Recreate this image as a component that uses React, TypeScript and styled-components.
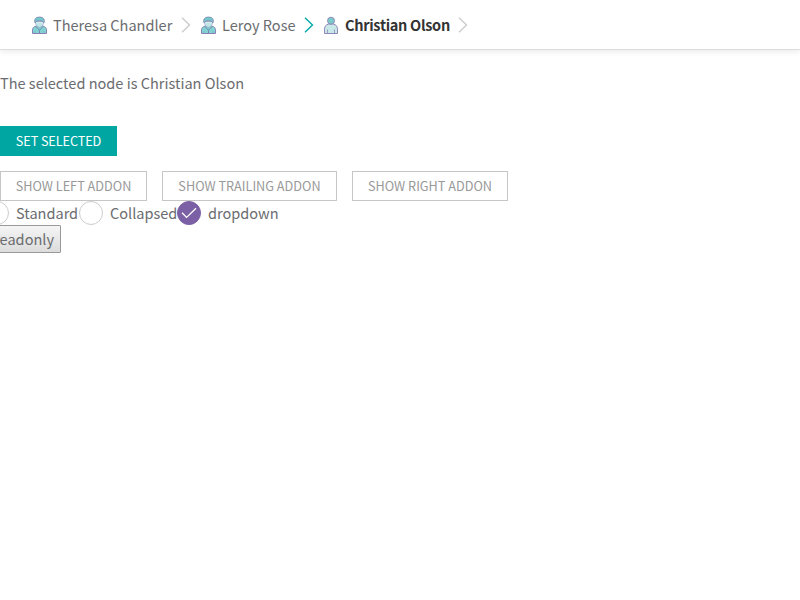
import React from 'react';
import styled, { createGlobalStyle } from 'styled-components';

const GlobalStyle = createGlobalStyle`
  *, *::before, *::after { box-sizing: border-box; }
  body {
    margin: 0;
    overflow: hidden;
    background: #fff;
    color: #6b6c6f;
    font: 400 14.54px/24px "Noto Sans CJK SC", "Noto Sans CJK JP", sans-serif;
  }
`;

const Bar = styled.nav`
  display: flex;
  align-items: center;
  height: 50px;
  padding: 0 0 0 30px;
  border-bottom: 1px solid #dcdcdc;
  box-shadow: 0 2px 6px rgba(0, 0, 0, 0.08);
`;

const Crumb = styled.div<{ $width: number }>`
  display: flex;
  align-items: center;
  flex: none;
  width: ${(p) => p.$width}px;
  height: 50px;
  white-space: nowrap;
`;

const CrumbLabel = styled.span<{ $current?: boolean }>`
  flex: 1;
  margin-left: 5px;
  padding-top: 1px;
  color: ${(p) => (p.$current ? '#333' : '#6b6c6f')};
  font-weight: ${(p) => (p.$current ? 700 : 400)};
  letter-spacing: ${(p) => (p.$current ? '-0.31px' : '0')};
`;

const Icon = styled.svg`
  display: block;
  flex: none;
`;

const Message = styled.p`
  margin: 21px 0 31px;
`;

const ButtonRow = styled.div`
  display: flex;
  gap: 15px;
  margin-bottom: 15px;
`;

const AddonRow = styled(ButtonRow)`
  margin-bottom: 0;
`;

const Button = styled.button<{ $primary?: boolean; $width: number }>`
  width: ${(p) => p.$width}px;
  height: 30px;
  padding: 0;
  border: 1px solid ${(p) => (p.$primary ? '#00a7a2' : '#c6c6c6')};
  background: ${(p) => (p.$primary ? '#00a7a2' : '#fff')};
  color: ${(p) => (p.$primary ? '#fff' : '#999')};
  font: 400 12.7px/28px "Noto Sans CJK SC", "Noto Sans CJK JP", sans-serif;
  letter-spacing: ${(p) => (p.$primary ? '-0.1px' : '0')};
  text-transform: uppercase;
  white-space: nowrap;
`;

const Choices = styled.div`
  display: flex;
  height: 24px;
  margin-left: -15px;
`;

const Choice = styled.label<{ $width: number }>`
  display: flex;
  align-items: center;
  flex: none;
  gap: 7px;
  width: ${(p) => p.$width}px;
  white-space: nowrap;
`;

const Dot = styled.span<{ $on?: boolean }>`
  display: flex;
  align-items: center;
  justify-content: center;
  flex: none;
  width: 24px;
  height: 24px;
  border: 1px solid ${(p) => (p.$on ? '#7c60a5' : '#ccc')};
  border-radius: 50%;
  background: ${(p) => (p.$on ? '#7c60a5' : '#fff')};
`;

const ReadonlyButton = styled.button`
  display: flex;
  align-items: center;
  justify-content: flex-end;
  width: 76px;
  height: 28px;
  margin-left: -15px;
  padding: 0 6px 0 0;
  border: 1px solid #999;
  border-radius: 1px;
  background: linear-gradient(#f5f5f5, #dcdcdc);
  color: #6b6c6f;
  font: inherit;
`;

const Surgeon = () => (
  <Icon width="18" height="18" viewBox="0 0 18 18" fill="none">
    <path d="M2.5 17.5v-4c0-1.5.8-2.3 4-3.7h6c3.2 1.4 4 2.2 4 3.7v4z" fill="#80d3d0" stroke="#8d80b7" />
    <path d="M5.4 5.5c0 3.2 1.6 5.6 4.1 5.6s4.1-2.4 4.1-5.6z" fill="#d3eeec" stroke="#9ba3c9" strokeWidth=".8" />
    <path d="M6.3 7.6c2-.9 4.4-.9 6.4 0-.4 1.8-1.5 3-3.2 3s-2.8-1.2-3.2-3z" fill="#bde6e4" />
    <path d="M5 6.8C3.8 3.2 6 1.1 9.5 1.1S15.2 3.2 14 6.8l-1.2-1.3c-2-1-4.6-1-6.6 0z" fill="#72cac8" stroke="#8580b5" strokeWidth=".9" />
    <path d="m6 10.6 3.5 3.6 3.5-3.6M9.5 14.2v3.3" stroke="#7972ac" strokeWidth=".8" />
    <path d="M4.8 15v2.5M14.2 15v2.5" stroke="#7972ac" strokeWidth=".3" />
  </Icon>
);

const Person = () => (
  <Icon width="18" height="18" viewBox="0 0 18 18" fill="none">
    <path d="M2.5 17.5v-4.3c0-2.9 1.5-4.5 4.2-5.2h4.6c2.7.7 4.2 2.3 4.2 5.2v4.3z" fill="#c9e9e9" stroke="#9085b9" />
    <circle cx="9" cy="4.7" r="3.5" fill="#7acbca" stroke="#8d84b9" strokeWidth=".9" />
    <path d="M5.5 13.5v4M12.5 13.5v4" stroke="#9085b9" strokeWidth=".8" />
  </Icon>
);

const Chevron = ({ color }: { color: string }) => (
  <Icon width="10" height="16" viewBox="0 0 10 16" fill="none">
    <path d="m1 .8 7.5 7.2L1 15.2" stroke={color} strokeWidth="1.4" />
  </Icon>
);

const Check = () => (
  <Icon width="16" height="12" viewBox="0 0 16 12" fill="none">
    <path d="m1 5.8 4.6 4.6L15 1.3" stroke="#fff" strokeWidth="1.3" />
  </Icon>
);

const crumbs = [
  { name: 'Theresa Chandler', width: 161, icon: <Surgeon />, arrow: '#ccc' },
  { name: 'Leroy Rose', width: 115, icon: <Surgeon />, arrow: '#00aaa5' },
  { name: 'Christian Olson', width: 146, icon: <Person />, arrow: '#ccc', current: true },
];

const Trail = styled.div`
  display: flex;
  gap: 8px;
`;

export default function App() {
  return (
    <>
      <GlobalStyle />
      <Bar>
        <Trail>
          {crumbs.map((c) => (
            <Crumb key={c.name} $width={c.width}>
              {c.icon}
              <CrumbLabel $current={c.current}>{c.name}</CrumbLabel>
              <Chevron color={c.arrow} />
            </Crumb>
          ))}
        </Trail>
      </Bar>
      <Message>The selected node is Christian Olson</Message>
      <ButtonRow>
        <Button $primary $width={117}>Set selected</Button>
      </ButtonRow>
      <AddonRow>
        <Button $width={147}>Show left addon</Button>
        <Button $width={175}>Show trailing addon</Button>
        <Button $width={156}>Show right addon</Button>
      </AddonRow>
      <Choices>
        <Choice $width={94}><Dot />Standard</Choice>
        <Choice $width={98}><Dot />Collapsed</Choice>
        <Choice $width={110}><Dot $on><Check /></Dot>dropdown</Choice>
      </Choices>
      <ReadonlyButton>readonly</ReadonlyButton>
    </>
  );
}
